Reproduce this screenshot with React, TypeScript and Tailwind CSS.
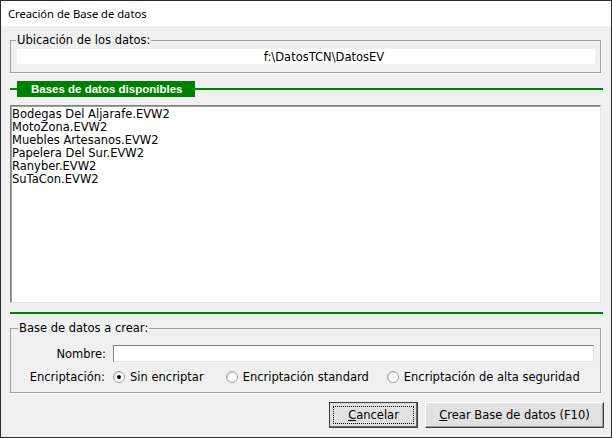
import React from 'react';

const files = [
  'Bodegas Del Aljarafe.EVW2',
  'MotoZona.EVW2',
  'Muebles Artesanos.EVW2',
  'Papelera Del Sur.EVW2',
  'Ranyber.EVW2',
  'SuTaCon.EVW2',
];

const Radio: React.FC<{ checked?: boolean; label: string; className?: string }> = ({ checked, label, className }) => (
  <label className={`flex items-center gap-[5px] ${className ?? ''}`}>
    <span className="w-[12px] h-[12px] rounded-full border border-[#a0a0a0] bg-white flex items-center justify-center shadow-[inset_1px_1px_0_#d8d8d8]">
      {checked && <span className="w-[4px] h-[4px] rounded-full bg-black" />}
    </span>
    <span>{label}</span>
  </label>
);

const App: React.FC = () => {
  return (
    <div
      className="w-[612px] h-[438px] border border-[#2b2b33] bg-[#f0f0f0] flex flex-col text-[11.5px] leading-[14px] text-black"
      style={{ fontFamily: '"DejaVu Sans", Verdana, sans-serif' }}
    >
      <div
        className="h-[25px] bg-white flex items-center pl-[7px] text-[11.2px]"
        style={{ fontFamily: '"Noto Sans", "Open Sans", sans-serif' }}
      >
        Creación de Base de datos
      </div>

      <div className="flex-1 flex flex-col pl-[9px] pr-[10px]">
        <fieldset className="mt-[7px] border border-[#a0a0a0] shadow-[1px_1px_0_#fff] pl-[6px] pr-[5px] pt-[2px] pb-[8px]">
          <legend className="-ml-[1px] px-[1px]">Ubicación de los datos:</legend>
          <div className="h-[15px] bg-white flex items-center justify-center pl-[36px]">
            f:\DatosTCN\DatosEV
          </div>
        </fieldset>

        <div className="mt-[8px] flex items-center h-[16px] -mr-[2px]">
          <div className="w-[7px] h-[2px] bg-[#008000]" />
          <div
            className="h-[16px] bg-[#008000] text-white text-[11.5px] font-bold pl-[14px] pr-[13px] flex items-center"
            style={{ fontFamily: '"Liberation Sans", Arial, sans-serif' }}
          >
            Bases de datos disponibles
          </div>
          <div className="flex-1 h-[2px] bg-[#008000]" />
        </div>

        <div className="mt-[8px] h-[198px] bg-white border-t border-l border-[#828282] border-b border-r border-b-[#e3e3e3] border-r-[#e3e3e3] shadow-[inset_1px_1px_0_#a0a0a0] pl-[1px] pt-[2px] leading-[13px]">
          {files.map((f) => (
            <div key={f}>{f}</div>
          ))}
        </div>

        <div className="mt-[9px] h-[2px] bg-[#008000] -mr-[2px]" />

        <fieldset className="mt-[7px] border border-[#a0a0a0] shadow-[1px_1px_0_#fff] pr-[6px] pt-[10px] pb-[8px]">
          <legend className="ml-[7px] px-[1px]">Base de datos a crear:</legend>
          <div className="flex items-center">
            <div className="w-[102px] text-right pr-[7px]">Nombre:</div>
            <div className="flex-1 h-[17px] bg-white border-t border-l border-[#828282] border-b border-r border-b-[#e3e3e3] border-r-[#e3e3e3]" />
          </div>
          <div className="flex items-center mt-[8px]">
            <div className="w-[102px] text-right pr-[8px]">Encriptación:</div>
            <Radio checked label="Sin encriptar" />
            <Radio className="ml-[22px]" label="Encriptación standard" />
            <Radio className="ml-[18px]" label="Encriptación de alta seguridad" />
          </div>
        </fieldset>

        <div className="mt-[9px] flex justify-end gap-[7px] -mr-[3px]">
          <button className="w-[89px] h-[26px] border border-[#3c3c3c] bg-[#e1e1e1] p-[3px] shadow-[inset_-1px_-1px_0_#696969]">
            <span className="w-full h-full flex items-center justify-center border border-dotted border-black">
              <span className="underline">C</span>ancelar
            </span>
          </button>
          <button className="w-[179px] h-[26px] bg-[#e1e1e1] border-t border-l border-white border-b border-r border-b-[#3c3c3c] border-r-[#3c3c3c] shadow-[inset_-1px_-1px_0_#a0a0a0] flex items-center justify-center">
            <span className="underline">C</span>rear Base de datos (F10)
          </button>
        </div>
      </div>
    </div>
  );
};

export default App;
